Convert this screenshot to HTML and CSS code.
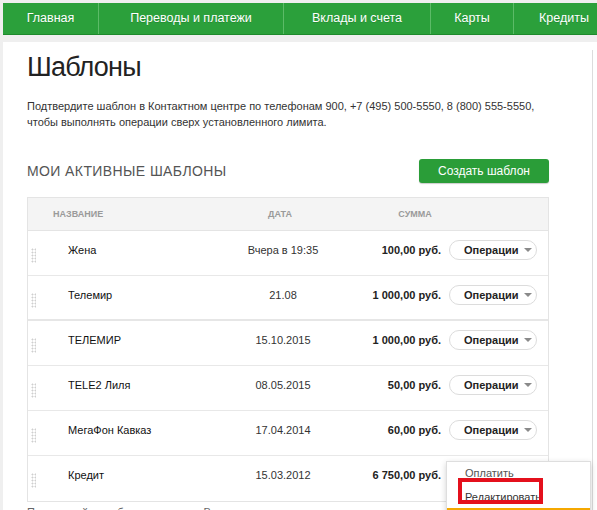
FILE: index.html
```html
<!DOCTYPE html>
<html lang="ru">
<head>
    <meta charset="UTF-8">
    <meta name="viewport" content="width=device-width, initial-scale=1.0">
    <title>Шаблоны</title>
    <link rel="stylesheet" href="styles.css">
</head>
<body>
    <div class="nav">
        <a class="nav-item w-main">Главная</a>
        <a class="nav-item w-pay">Переводы и платежи</a>
        <a class="nav-item w-dep">Вклады и счета</a>
        <a class="nav-item w-card">Карты</a>
        <a class="nav-item w-cred">Кредиты</a>
    </div>
    <div class="card">
        <div class="main">
            <h1 class="title">Шаблоны</h1>
            <p class="note">Подтвердите шаблон в Контактном центре по телефонам 900, +7 (495) 500-5550, 8 (800) 555-5550,<br>чтобы выполнять операции сверх установленного лимита.</p>

            <div class="section-head">
                <h2>Мои активные шаблоны</h2>
                <button class="btn-create">Создать шаблон</button>
            </div>

            <div class="templates">
                <div class="thead">
                    <span class="th-name">Название</span>
                    <span class="th-date">Дата</span>
                    <span class="th-sum">Сумма</span>
                </div>
                <div class="row">
                    <span class="grip"></span>
                    <span class="name">Жена</span>
                    <span class="date">Вчера в 19:35</span>
                    <span class="sum">100,00 руб.</span>
                    <span class="ops"><button class="btn-ops">Операции<i class="caret"></i></button></span>
                </div>
                <div class="row row-split">
                    <span class="grip"></span>
                    <span class="name">Телемир</span>
                    <span class="date">21.08</span>
                    <span class="sum">1 000,00 руб.</span>
                    <span class="ops"><button class="btn-ops">Операции<i class="caret"></i></button></span>
                </div>
                <div class="row">
                    <span class="grip"></span>
                    <span class="name">ТЕЛЕМИР</span>
                    <span class="date">15.10.2015</span>
                    <span class="sum">1 000,00 руб.</span>
                    <span class="ops"><button class="btn-ops">Операции<i class="caret"></i></button></span>
                </div>
                <div class="row">
                    <span class="grip"></span>
                    <span class="name">TELE2 Лиля</span>
                    <span class="date">08.05.2015</span>
                    <span class="sum">50,00 руб.</span>
                    <span class="ops"><button class="btn-ops">Операции<i class="caret"></i></button></span>
                </div>
                <div class="row">
                    <span class="grip"></span>
                    <span class="name">МегаФон Кавказ</span>
                    <span class="date">17.04.2014</span>
                    <span class="sum">60,00 руб.</span>
                    <span class="ops"><button class="btn-ops">Операции<i class="caret"></i></button></span>
                </div>
                <div class="row">
                    <span class="grip"></span>
                    <span class="name">Кредит</span>
                    <span class="date">15.03.2012</span>
                    <span class="sum">6 750,00 руб.</span>
                    <span class="ops">
                        <button class="btn-ops">Операции<i class="caret"></i></button>
                        <div class="menu">
                            <a class="menu-item">Оплатить</a>
                            <a class="menu-item">Редактировать</a>
                            <a class="menu-item">Удалить</a>
                            <span class="mark"></span>
                        </div>
                    </span>
                </div>
            </div>

            <p class="hint">Перемещайте шаблоны в нужном Вам порядке</p>
        </div>
        <div class="aside"></div>
    </div>
</body>
</html>
```

FILE: styles.css
```css
*{
    box-sizing: border-box;
}
body{
    margin: 0;
    padding: 3px 0 0 3px;
    background: #efefef;
    font-family: "Liberation Sans", Arial, sans-serif;
    color: #333;
    overflow: hidden;
}
.nav{
    display: flex;
    height: 32px;
    background: #2ba03b;
    border-bottom: 1px solid #1e8a2c;
    overflow: hidden;
}
.nav-item{
    flex: none;
    color: #fff;
    font-size: 12.5px;
    line-height: 31px;
    text-align: center;
    border-right: 1px solid #5cbb67;
    text-shadow: 0 1px 0 rgba(0,0,0,0.15);
}
.w-main{ width: 96px; }
.w-pay{ width: 185px; }
.w-dep{ width: 147px; }
.w-card{ width: 83px; }
.w-cred{ width: 100px; border-right: 0; }

.card{
    display: flex;
    background: #fff;
    margin-top: 7px;
    height: 480px;
}
.main{
    flex: none;
    width: 589px;
    padding: 9px 0 0 24px;
}
.aside{
    flex: 1;
    margin-top: 8px;
    border-left: 1px solid #dcdcdc;
}
.title{
    margin: 0;
    font-size: 27px;
    line-height: 32px;
    font-weight: normal;
    letter-spacing: -0.8px;
    color: #222;
}
.note{
    margin: 15px 0 0;
    font-size: 11px;
    line-height: 16px;
    color: #333;
}
.section-head{
    width: 522px;
    margin-top: 29px;
    height: 24px;
    display: flex;
    align-items: center;
    justify-content: space-between;
}
.section-head h2{
    margin: 0;
    font-size: 14px;
    line-height: 24px;
    font-weight: normal;
    text-transform: uppercase;
    letter-spacing: 0.4px;
    color: #555;
}
.btn-create{
    width: 130px;
    height: 24px;
    border: 0;
    border-radius: 3px;
    background: #2a9d38;
    color: #fff;
    font-family: inherit;
    font-size: 12px;
    box-shadow: 0 1px 1px rgba(0,0,0,0.2);
}

.templates{
    width: 522px;
    margin-top: 14px;
    border: 1px solid #e4e4e4;
}
.thead{
    display: flex;
    height: 33px;
    align-items: center;
    background: #f4f4f4;
    border-bottom: 1px solid #e4e4e4;
    font-size: 9px;
    font-weight: bold;
    text-transform: uppercase;
    color: #9a9a9a;
}
.th-name{
    width: 200px;
    padding-left: 25px;
}
.th-date{
    width: 104px;
    text-align: center;
}
.th-sum{
    width: 166px;
    text-align: center;
}
.row{
    display: grid;
    grid-template-columns: 40px 163px 104px 114px 88px;
    height: 45px;
    padding-top: 9px;
    border-bottom: 1px solid #e8e8e8;
    font-size: 11px;
    line-height: 20px;
}
.row:last-child{
    border-bottom: 0;
}
.row-split{
    border-bottom: 2px solid #e6e6e6;
}
.grip{
    width: 5px;
    height: 15px;
    margin: 8px 0 0 3px;
    background-image: radial-gradient(circle, #cfcfcf 0.9px, transparent 1.1px);
    background-size: 3px 3px;
}
.name{
    color: #111;
}
.date{
    text-align: center;
    color: #333;
}
.sum{
    text-align: right;
    padding-right: 8px;
    font-weight: bold;
    color: #222;
}
.ops{
    position: relative;
}
.btn-ops{
    display: flex;
    align-items: center;
    width: 88px;
    height: 20px;
    padding: 0 0 0 14px;
    border: 1px solid #dcdcdc;
    border-radius: 10px;
    background: #fff;
    font-family: inherit;
    font-size: 11px;
    font-weight: bold;
    color: #222;
}
.caret{
    margin-left: 6px;
    border-left: 4px solid transparent;
    border-right: 4px solid transparent;
    border-top: 4px solid #8a8a8a;
}

.menu{
    position: absolute;
    left: -3px;
    top: -4px;
    width: 145px;
    background: #fff;
    border: 1px solid #dedede;
    box-shadow: 0 2px 6px rgba(0,0,0,0.18);
    z-index: 2;
}
.menu-item{
    display: block;
    height: 23px;
    padding-left: 18px;
    font-size: 11px;
    line-height: 23px;
    color: #555;
}
.menu-item:nth-child(2){
    color: #333;
    line-height: 25px;
}
.menu-item:nth-child(3){
    border-top: 2px solid #f5a800;
}
.mark{
    position: absolute;
    left: 11px;
    top: 16px;
    width: 85px;
    height: 26px;
    border: 4px solid #e4101c;
}
.hint{
    margin: 2px 0 0;
    font-size: 11px;
    line-height: 16px;
    color: #666;
}
```
